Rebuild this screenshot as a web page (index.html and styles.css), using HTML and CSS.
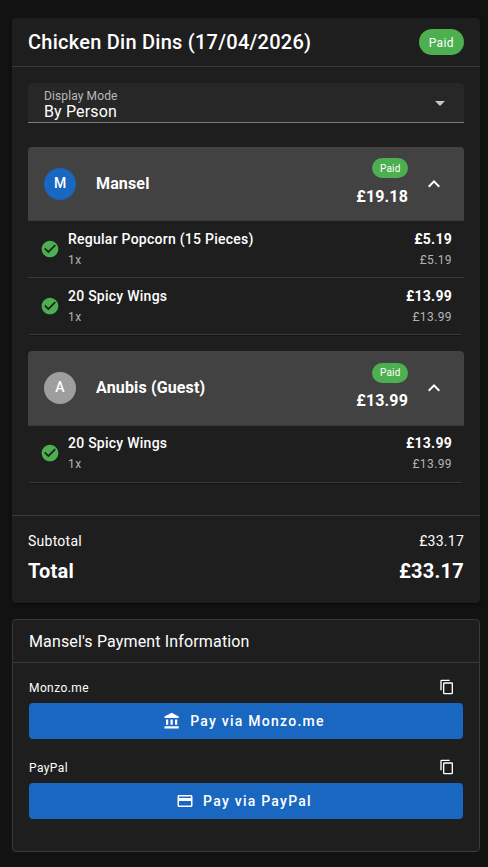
FILE: index.html
```html
<!DOCTYPE html>
<html lang="en">
<head>
<meta charset="utf-8">
<title>Chicken Din Dins</title>
<link rel="stylesheet" href="styles.css">
</head>
<body>
<svg class="defs" aria-hidden="true">
  <symbol id="up" viewBox="0 0 24 24"><path d="M7.41,15.41L12,10.83L16.59,15.41L18,14L12,8L6,14L7.41,15.41Z"/></symbol>
  <symbol id="down" viewBox="0 0 24 24"><path d="M7,10L12,15L17,10H7Z"/></symbol>
  <symbol id="check" viewBox="0 0 24 24"><path d="M12 2C6.5 2 2 6.5 2 12S6.5 22 12 22 22 17.5 22 12 17.5 2 12 2M10 17L5 12L6.41 10.59L10 14.17L17.59 6.58L19 8L10 17Z"/></symbol>
  <symbol id="bank" viewBox="0 0 24 24"><path d="M11.5,1L2,6V8H21V6M16,10V17H19V10M2,22H21V19H2M10,10V17H13V10M4,10V17H7V10H4Z"/></symbol>
  <symbol id="card" viewBox="0 0 24 24"><path d="M20,8H4V6H20M20,18H4V12H20M20,4H4C2.89,4 2,4.89 2,6V18A2,2 0 0,0 4,20H20A2,2 0 0,0 22,18V6C22,4.89 21.1,4 20,4Z"/></symbol>
  <symbol id="copy" viewBox="0 0 24 24"><path d="M19,21H8V7H19M19,5H8A2,2 0 0,0 6,7V21A2,2 0 0,0 8,23H19A2,2 0 0,0 21,21V7A2,2 0 0,0 19,5M16,1H4A2,2 0 0,0 2,3V17H4V3H16V1Z"/></symbol>
</svg>
<main class="page">
  <section class="bill">
    <header class="bill-head">
      <h1 class="title">Chicken Din Dins (17/04/2026)</h1>
      <span class="chip">Paid</span>
    </header>
    <div class="bill-body">
      <div class="select">
        <div class="select-text">
          <span class="select-label">Display Mode</span>
          <span class="select-value">By Person</span>
        </div>
        <svg class="select-arrow"><use href="#down"/></svg>
      </div>

      <article class="panel">
        <header class="panel-head">
          <span class="avatar">M</span>
          <h2 class="name">Mansel</h2>
          <div class="sum"><span class="chip chip-small">Paid</span><strong class="amount">£19.18</strong></div>
          <svg class="chevron"><use href="#up"/></svg>
        </header>
        <div class="item">
          <svg class="tick"><use href="#check"/></svg>
          <div class="desc"><span class="item-name">Regular Popcorn (15 Pieces)</span><span class="sub">1x</span></div>
          <div class="price"><strong class="item-price">£5.19</strong><span class="sub">£5.19</span></div>
        </div>
        <div class="item item-last">
          <svg class="tick"><use href="#check"/></svg>
          <div class="desc"><span class="item-name">20 Spicy Wings</span><span class="sub">1x</span></div>
          <div class="price"><strong class="item-price">£13.99</strong><span class="sub">£13.99</span></div>
        </div>
      </article>

      <article class="panel panel-guest">
        <header class="panel-head">
          <span class="avatar avatar-guest">A</span>
          <h2 class="name">Anubis (Guest)</h2>
          <div class="sum"><span class="chip chip-small">Paid</span><strong class="amount">£13.99</strong></div>
          <svg class="chevron"><use href="#up"/></svg>
        </header>
        <div class="item item-last">
          <svg class="tick"><use href="#check"/></svg>
          <div class="desc"><span class="item-name">20 Spicy Wings</span><span class="sub">1x</span></div>
          <div class="price"><strong class="item-price">£13.99</strong><span class="sub">£13.99</span></div>
        </div>
      </article>
    </div>
    <footer class="totals">
      <div class="subtotal"><span>Subtotal</span><span>£33.17</span></div>
      <div class="total"><span>Total</span><span>£33.17</span></div>
    </footer>
  </section>

  <section class="payment">
    <h2 class="payment-title">Mansel's Payment Information</h2>
    <div class="payment-body">
      <div class="method">
        <div class="method-head"><span>Monzo.me</span><svg class="copy"><use href="#copy"/></svg></div>
        <button class="pay"><svg class="pay-icon"><use href="#bank"/></svg><span>Pay via Monzo.me</span></button>
      </div>
      <div class="method">
        <div class="method-head"><span>PayPal</span><svg class="copy"><use href="#copy"/></svg></div>
        <button class="pay"><svg class="pay-icon"><use href="#card"/></svg><span>Pay via PayPal</span></button>
      </div>
    </div>
  </section>
</main>
</body>
</html>
```
FILE: styles.css
```css
* { box-sizing: border-box; }
body {
  margin: 0;
  background: #121212;
  color: #fff;
  font-family: Roboto, sans-serif;
  font-size: 16px;
}
h1, h2 { margin: 0; }
svg { fill: currentColor; flex: none; display: block; }
.defs { display: none; }
.page { padding: 18px 8px 15px 12px; display: flex; flex-direction: column; gap: 16px; }

.bill {
  height: 585px;
  background: #1e1e1e;
  border-radius: 4px;
  box-shadow: 0 3px 1px -2px rgba(0,0,0,.2), 0 2px 2px rgba(0,0,0,.14), 0 1px 5px rgba(0,0,0,.12);
  display: flex;
  flex-direction: column;
}
.bill-head {
  height: 49px;
  padding: 0 16px;
  border-bottom: 1px solid #393939;
  display: flex;
  align-items: center;
  justify-content: space-between;
}
.title { font-size: 20px; font-weight: 500; line-height: 32px; letter-spacing: .25px; }
.chip {
  height: 26px;
  padding: 1px 10px 0;
  border-radius: 13px;
  background: #4caf50;
  font-size: 12px;
  line-height: 26px;
  letter-spacing: .4px;
}
.chip-small {
  width: 36px;
  height: 20px;
  padding: 0 0 0 8px;
  font-size: 10px;
  line-height: 21px;
  letter-spacing: .2px;
}

.bill-body { height: 448px; padding: 16px; }
.select {
  height: 40px;
  padding: 0 12px 0 16px;
  background: #272727;
  border-bottom: 1px solid #7d7d7d;
  border-radius: 4px 4px 0 0;
  display: flex;
  justify-content: space-between;
}
.select-text { display: flex; flex-direction: column; padding-top: 6px; }
.select-label { color: #b9b9b9; font-size: 12px; line-height: 14px; letter-spacing: .11px; }
.select-value { font-size: 16px; line-height: 18px; letter-spacing: .15px; }
.select-arrow { width: 24px; height: 24px; margin-top: 8px; color: #c7c7c7; }

.panel { margin-top: 24px; }
.panel-guest { margin-top: 16px; }
.panel-head {
  height: 74px;
  padding: 0 18px 0 16px;
  background: #424242;
  border-bottom: 1px solid #393939;
  border-radius: 4px 4px 0 0;
  display: flex;
  align-items: center;
}
.panel-guest .panel-head { height: 75px; }
.avatar {
  width: 32px;
  height: 32px;
  border-radius: 50%;
  background: #1967c0;
  font-size: 14px;
  font-weight: 500;
  line-height: 31px;
  text-align: center;
}
.avatar-guest { background: #9e9e9e; }
.name { margin-left: 20px; font-size: 16px; font-weight: 700; line-height: 20px; letter-spacing: .15px; }
.sum { margin-left: auto; display: flex; flex-direction: column; align-items: flex-end; }
.amount { margin-top: 7px; font-weight: 700; line-height: 24px; letter-spacing: .15px; }
.panel-guest .amount { margin-top: 6px; }
.panel-guest .chip-small { line-height: 20px; }
.chevron { width: 24px; height: 24px; margin-left: 14px; }

.item {
  height: 57px;
  padding: 8px 12px 0;
  border-bottom: 1px solid #393939;
  display: flex;
}
.item-last { margin: 0 2px; padding: 8px 10px 0; box-shadow: 0 1px 0 #141414; }
.panel-guest .item { padding-top: 7px; }
.tick { width: 20px; height: 20px; margin: 10px 8px 0 0; color: #4caf50; }
.desc, .price { display: flex; flex-direction: column; gap: 1px; }
.price { margin-left: auto; align-items: flex-end; }
.item-name, .item-price { font-size: 14px; font-weight: 500; line-height: 20px; letter-spacing: .25px; }
.item-price { font-weight: 700; }
.sub { color: #b4b4b4; font-size: 12px; line-height: 20px; letter-spacing: .4px; }

.totals { flex: 1; padding: 15px 16px; border-top: 1px solid #393939; }
.subtotal, .total { display: flex; justify-content: space-between; }
.subtotal { font-size: 14px; line-height: 20px; letter-spacing: .25px; }
.total { margin-top: 4px; font-size: 20px; font-weight: 700; line-height: 32px; letter-spacing: .25px; }

.payment { height: 233px; background: #1e1e1e; border: 1px solid #393939; border-radius: 4px; }
.payment-title {
  height: 43px;
  padding: 0 16px;
  border-bottom: 1px solid #393939;
  font-size: 16px;
  font-weight: 400;
  line-height: 43px;
  letter-spacing: .15px;
}
.payment-body { padding: 15px 16px 0; display: flex; flex-direction: column; gap: 19px; }
.method-head {
  height: 25px;
  padding: 0 8px 6px 0;
  font-size: 12px;
  line-height: 20px;
  letter-spacing: .4px;
  display: flex;
  align-items: center;
  justify-content: space-between;
}
.copy { width: 16px; height: 16px; margin-bottom: 1px; }
.pay {
  width: 100%;
  height: 36px;
  padding: 0;
  border: 0;
  border-radius: 4px;
  background: #1967c0;
  color: #fff;
  font: 500 14px/20px Roboto, sans-serif;
  letter-spacing: 1.25px;
  display: flex;
  align-items: center;
  justify-content: center;
}
.pay-icon { width: 18px; height: 18px; margin: 0 9px 0 -4px; }
```
